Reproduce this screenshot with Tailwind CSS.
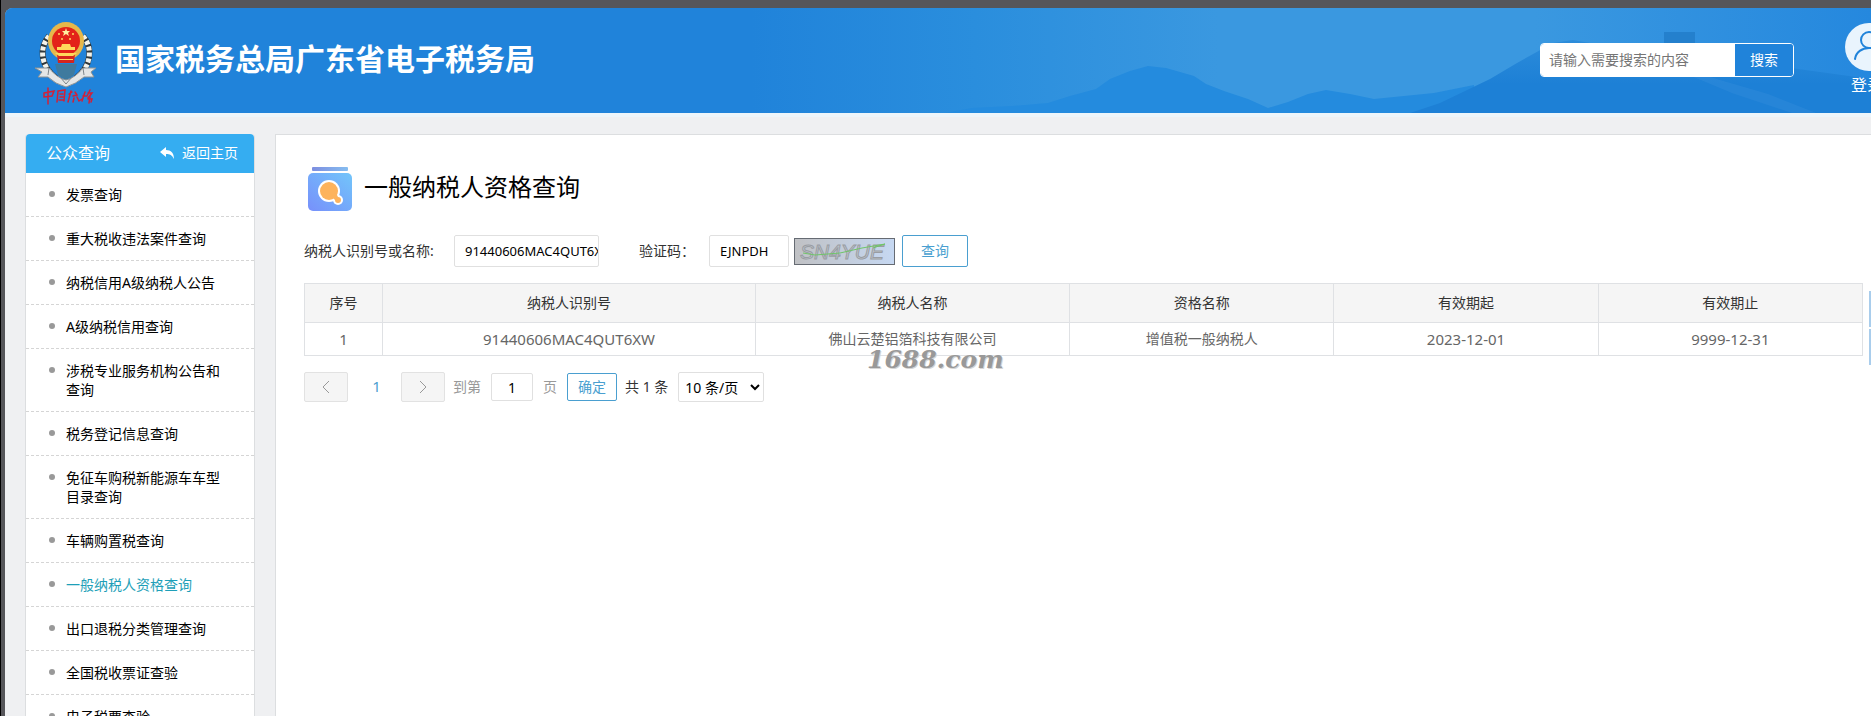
<!DOCTYPE html>
<html lang="zh-CN">
<head>
    <meta charset="UTF-8">
    <meta name="viewport" content="width=device-width, initial-scale=1.0">
    <title>一般纳税人资格查询</title>
    <script src="https://cdn.jsdelivr.net/npm/@tailwindcss/browser@4"></script>
</head>
<body class="min-h-screen overflow-x-hidden bg-[#56565a] border-l border-black pl-1 pt-2 text-sm text-black font-['Noto_Sans','Noto_Sans_CJK_SC',sans-serif]">
    <div class="min-h-screen overflow-hidden rounded-tl-lg bg-[#eff0f2]">

        <!-- Header -->
        <header class="relative flex h-[105px] items-center overflow-hidden bg-[#2083da] pl-7">
            <svg class="absolute inset-0 h-full w-full" viewBox="0 0 1866 105" preserveAspectRatio="xMaxYMid slice" aria-hidden="true">
                <defs>
                    <linearGradient id="sky" x1="0" y1="0" x2="1" y2="0">
                        <stop offset="0.4" stop-color="#2083da"/>
                        <stop offset="0.52" stop-color="#2a8edd"/>
                        <stop offset="0.65" stop-color="#3a98e0"/>
                        <stop offset="0.82" stop-color="#3a98e0"/>
                        <stop offset="1" stop-color="#2588de"/>
                    </linearGradient>
                    <linearGradient id="hill" x1="0" y1="0" x2="0" y2="1">
                        <stop offset="0" stop-color="#2c8cda"/>
                        <stop offset="0.6" stop-color="#1d80d6"/>
                    </linearGradient>
                </defs>
                <rect width="1866" height="105" fill="url(#sky)"/>
                <path d="M940 105l27-5 40-2 36-3 22-7 26-7 14-10 20-8 18-5 18 2 28 8 12 8 18 7 24 8 20 9 20-6 20-8 18-4 24 4 24 5 60-6 40-8v28z" fill="#248bde"/>
                <path d="M1405 105l30-10 50-24 27-16 36-20 20-3 17 3 30 8 60 4 60 6 131 18v34z" fill="url(#hill)"/>
                <path d="M1659 24h31v14h-31z" fill="#2480cd"/>
                <path d="M1640 48l75 24 48 14 48 19h-24l-60-20-60-25z" fill="#3a8fdc" opacity=".35"/>
            </svg>

            <svg class="relative mt-[2px] h-[86px] w-16 shrink-0" viewBox="0 0 64 86" role="img" aria-label="中国税务">
                <g fill="none" stroke="#30383b" stroke-width="6">
                    <path d="M16 17C6 29 7 47 24 60"/>
                    <path d="M50 17C60 29 59 47 42 60"/>
                </g>
                <g fill="none" stroke="#f3f3ec" stroke-width="5" stroke-dasharray="4 2">
                    <path d="M16 17C6 29 7 47 24 60"/>
                    <path d="M50 17C60 29 59 47 42 60"/>
                </g>
                <path d="M22 45l22 0-3 11-8 5-8-5z" fill="#3e7a9e"/>
                <ellipse cx="33" cy="22" rx="18" ry="19" fill="#e6b84b"/>
                <circle cx="33" cy="22" r="14" fill="#e32219"/>
                <path d="M24 35h18l-1 9H25z" fill="#d5251d"/>
                <path d="M33 9l1 3h3l-2 2 1 3-3-2-3 2 1-3-2-2h3z" fill="#fff0a0"/>
                <g fill="#ffd95c">
                    <circle cx="26" cy="15" r="1"/><circle cx="40" cy="15" r="1"/><circle cx="29" cy="20" r="1"/><circle cx="37" cy="20" r="1"/>
                    <path d="M29 25h8l1 3h4v3H24v-3h4zM22 34h22l-4 3H26zM26 40h14v1H26z"/>
                </g>
                <path d="M2 49l14 0q8 10 17 12q9-2 17-12h13l-5 4 3 5h-10q-8 7-18 10q-11-3-18-10H5l4-5z" fill="#e4e6e6" stroke="#8b9295" stroke-width="1"/>
                <path d="M16 49l-1 7M50 49l1 7M27 58l6 7 6-7" fill="none" stroke="#7f868a"/>
                <g fill="none" stroke="#d41f36" stroke-width="1.5" stroke-linecap="round">
                    <path d="M11 74l10-2-2 5-8 1zM15 69v16"/>
                    <path d="M25 72l-1 11M25 72l7-1-1 11M27 75l3 0M27 78h3M26 81l4 0"/>
                    <path d="M38 72l-3 11M36 75l3-2M42 73l2 3-4 1M41 79l-1 4M44 78l2 4 3-2"/>
                    <path d="M52 73l-3 9M50 77l3 0M57 71l-3 6M55 74h4l-4 5M57 77l-1 7M55 80h4l-1 3"/>
                </g>
            </svg>
            <h1 class="relative ml-[18px] whitespace-nowrap pb-1 text-[30px] font-bold leading-10 text-white">国家税务总局广东省电子税务局</h1>

            <form class="relative mb-[2px] ml-auto mr-[51px] flex h-[34px] w-[254px] shrink-0 overflow-hidden rounded-sm border border-white">
                <input type="text" aria-label="搜索内容" placeholder="请输入需要搜索的内容" class="min-w-0 flex-1 bg-white px-2 text-sm placeholder-[#757575] outline-none">
                <button type="button" class="w-[58px] bg-[#2083da] text-sm text-white">搜索</button>
            </form>
            <a href="#" class="relative -mr-[22px] flex shrink-0 flex-col gap-[2px] pb-[2px] text-base leading-6 text-white">
                <svg class="h-12 w-12" viewBox="0 0 48 48" aria-hidden="true">
                    <circle cx="24" cy="24" r="24" fill="#e9f4fd"/>
                    <g fill="none" stroke="#2083da" stroke-width="2" stroke-linecap="round">
                        <circle cx="24" cy="17" r="8"/>
                        <path d="M10 36c1-7 7-11 14-11s13 4 14 11"/>
                    </g>
                </svg>
                <span class="pl-[6px]">登录</span>
            </a>
        </header>

        <div class="flex items-stretch gap-5 border-t-4 border-[#edf5fa] pt-[17px] pl-5">

            <!-- Sidebar -->
            <aside class="w-[230px] shrink-0 rounded-t-sm border border-t-0 border-[#dcdee0] bg-white">
                <div class="flex h-[39px] items-center justify-between rounded-t-sm bg-[#35adf1] pb-[2px] pl-5 pr-4 text-white">
                    <h2 class="text-base">公众查询</h2>
                    <a href="#" class="flex items-center gap-2">
                        <svg class="h-3 w-[14px]" viewBox="0 0 14 12" fill="currentColor" aria-hidden="true"><path d="M6 0v3c5 0 8 3 8 9-2-4-4-5-8-5v3L0 5z"/></svg>
                        返回主页
                    </a>
                </div>
                <ul id="menu" class="leading-[19px]">
                    <li class="flex border-b border-dashed border-[#d5d5d5] py-3 pl-[23px] pr-6"><span class="mt-[6px] mr-[11px] size-[6px] shrink-0 rounded-full bg-[#999]"></span><a href="#">发票查询</a></li>
                    <li class="flex border-b border-dashed border-[#d5d5d5] py-3 pl-[23px] pr-6"><span class="mt-[6px] mr-[11px] size-[6px] shrink-0 rounded-full bg-[#999]"></span><a href="#">重大税收违法案件查询</a></li>
                    <li class="flex border-b border-dashed border-[#d5d5d5] py-3 pl-[23px] pr-6"><span class="mt-[6px] mr-[11px] size-[6px] shrink-0 rounded-full bg-[#999]"></span><a href="#">纳税信用A级纳税人公告</a></li>
                    <li class="flex border-b border-dashed border-[#d5d5d5] py-3 pl-[23px] pr-6"><span class="mt-[6px] mr-[11px] size-[6px] shrink-0 rounded-full bg-[#999]"></span><a href="#">A级纳税信用查询</a></li>
                    <li class="flex border-b border-dashed border-[#d5d5d5] py-3 pl-[23px] pr-6"><span class="mt-[6px] mr-[11px] size-[6px] shrink-0 rounded-full bg-[#999]"></span><a href="#">涉税专业服务机构公告和查询</a></li>
                    <li class="flex border-b border-dashed border-[#d5d5d5] py-3 pl-[23px] pr-6"><span class="mt-[6px] mr-[11px] size-[6px] shrink-0 rounded-full bg-[#999]"></span><a href="#">税务登记信息查询</a></li>
                    <li class="flex border-b border-dashed border-[#d5d5d5] py-3 pl-[23px] pr-6"><span class="mt-[6px] mr-[11px] size-[6px] shrink-0 rounded-full bg-[#999]"></span><a href="#">免征车购税新能源车车型目录查询</a></li>
                    <li class="flex border-b border-dashed border-[#d5d5d5] py-3 pl-[23px] pr-6"><span class="mt-[6px] mr-[11px] size-[6px] shrink-0 rounded-full bg-[#999]"></span><a href="#">车辆购置税查询</a></li>
                    <li class="flex border-b border-dashed border-[#d5d5d5] py-3 pl-[23px] pr-6"><span class="mt-[6px] mr-[11px] size-[6px] shrink-0 rounded-full bg-[#999]"></span><a href="#" class="text-[#1e9fb8]">一般纳税人资格查询</a></li>
                    <li class="flex border-b border-dashed border-[#d5d5d5] py-3 pl-[23px] pr-6"><span class="mt-[6px] mr-[11px] size-[6px] shrink-0 rounded-full bg-[#999]"></span><a href="#">出口退税分类管理查询</a></li>
                    <li class="flex border-b border-dashed border-[#d5d5d5] py-3 pl-[23px] pr-6"><span class="mt-[6px] mr-[11px] size-[6px] shrink-0 rounded-full bg-[#999]"></span><a href="#">全国税收票证查验</a></li>
                    <li class="flex border-b border-dashed border-[#d5d5d5] py-3 pl-[23px] pr-6"><span class="mt-[6px] mr-[11px] size-[6px] shrink-0 rounded-full bg-[#999]"></span><a href="#">电子税票查验</a></li>
                </ul>
            </aside>

            <!-- Main content -->
            <main class="relative min-w-0 flex-1 border-l border-t border-[#dcdee0] bg-white pl-7 pr-2 pt-8">
                <div class="flex items-center gap-3 pl-1">
                    <svg class="h-11 w-11" viewBox="0 0 44 44" aria-hidden="true">
                        <defs>
                            <linearGradient id="box" x1="0" y1="1" x2="1" y2="0"><stop offset="0" stop-color="#7790fb"/><stop offset="1" stop-color="#72c5fa"/></linearGradient>
                            <linearGradient id="lid" x1="0" y1="0" x2="1" y2="0"><stop offset="0" stop-color="#7d8ee0"/><stop offset="1" stop-color="#86bdf0"/></linearGradient>
                        </defs>
                        <rect x="4" y="0" width="36" height="4" rx="1" fill="url(#lid)"/>
                        <rect y="6" width="44" height="38" rx="5" fill="url(#box)"/>
                        <circle cx="21" cy="24" r="11" fill="#fff"/>
                        <circle cx="30" cy="33" r="5" fill="#fff"/>
                        <circle cx="21" cy="24" r="9" fill="#fdb35c"/>
                        <path d="M23 29l5-3 2 4q3 0 3 3 0 3-3 3-3 0-3-3z" fill="#fdb35c"/>
                    </svg>
                    <h2 class="pb-1 text-2xl">一般纳税人资格查询</h2>
                </div>

                <form class="mt-6 flex items-center text-[#333]">
                    <label for="taxpayer" class="w-[150px] shrink-0">纳税人识别号或名称:</label>
                    <input id="taxpayer" type="text" value="91440606MAC4QUT6XW" class="h-8 w-[145px] rounded-xs border border-[#e0e0e0] bg-white pl-[10px] text-[13px] text-black outline-none">
                    <label for="captcha" class="ml-10 w-[70px] shrink-0">验证码：</label>
                    <input id="captcha" type="text" value="EJNPDH" class="h-8 w-20 rounded-xs border border-[#e0e0e0] bg-white pl-[10px] text-[13px] text-black outline-none">
                    <svg class="ml-[5px] h-[27px] w-[101px]" viewBox="0 0 101 27" role="img" aria-label="验证码图片">
                        <defs><linearGradient id="cap" x1="0" y1="0" x2="1" y2="0"><stop offset="0" stop-color="#c0c1c4"/><stop offset="1" stop-color="#c6d8f2"/></linearGradient></defs>
                        <rect x=".5" y=".5" width="100" height="26" fill="url(#cap)" stroke="#666b73"/>
                        <text x="6" y="21" font-family="Liberation Sans" font-size="21" font-style="italic" fill="#c2c8cf" stroke="#999da3" stroke-width="1">SN4YUE</text>
                        <path d="M9 15l12 2 25-2 22-5 23-4-12 4" fill="none" stroke="#6fc568" stroke-width="1"/>
                    </svg>
                    <button type="button" class="ml-[7px] h-8 w-[66px] rounded-xs border border-[#4a9fd0] bg-white text-[#4a9fd0]">查询</button>
                </form>

                <table class="mt-4 w-full table-fixed border-collapse text-center leading-5">
                    <colgroup>
                        <col class="w-[78px]"><col class="w-[373px]"><col class="w-[314px]"><col><col><col>
                    </colgroup>
                    <thead class="bg-[#f5f5f5] text-[#333]">
                        <tr class="h-[39px]">
                            <th class="border border-[#dfe1e4] font-normal">序号</th>
                            <th class="border border-[#dfe1e4] font-normal">纳税人识别号</th>
                            <th class="border border-[#dfe1e4] font-normal">纳税人名称</th>
                            <th class="border border-[#dfe1e4] font-normal">资格名称</th>
                            <th class="border border-[#dfe1e4] font-normal">有效期起</th>
                            <th class="border border-[#dfe1e4] font-normal">有效期止</th>
                        </tr>
                    </thead>
                    <tbody class="text-[#666]">
                        <tr class="h-[33px]">
                            <td class="border border-[#dfe1e4] text-[15px]">1</td>
                            <td class="border border-[#dfe1e4] text-[15px]">91440606MAC4QUT6XW</td>
                            <td class="border border-[#dfe1e4]">佛山云楚铝箔科技有限公司</td>
                            <td class="border border-[#dfe1e4]">增值税一般纳税人</td>
                            <td class="border border-[#dfe1e4] text-[15px]">2023-12-01</td>
                            <td class="border border-[#dfe1e4] text-[15px]">9999-12-31</td>
                        </tr>
                    </tbody>
                </table>

                <!-- Pagination -->
                <div class="mt-4 flex items-center text-[#333]">
                    <button type="button" aria-label="上一页" class="flex h-[30px] w-11 items-center justify-center rounded-xs border border-[#e2e2e2] bg-[#f5f5f5] text-[#999]">
                        <svg class="h-3 w-2" viewBox="0 0 8 12" fill="none" stroke="currentColor"><path d="M7 0L1 6l6 6"/></svg>
                    </button>
                    <span class="w-[53px] pl-1 text-center text-[15px] text-[#4a9fd0]">1</span>
                    <button type="button" aria-label="下一页" class="flex h-[30px] w-11 items-center justify-center rounded-xs border border-[#e2e2e2] bg-[#f5f5f5] text-[#999]">
                        <svg class="h-3 w-2" viewBox="0 0 8 12" fill="none" stroke="currentColor"><path d="M1 0l6 6-6 6"/></svg>
                    </button>
                    <label for="page" class="ml-2 text-[#999]">到第</label>
                    <input id="page" type="text" value="1" class="mx-[10px] h-7 w-[42px] rounded-xs border border-[#e0e0e0] bg-white text-center text-black outline-none">
                    <span class="text-[#999]">页</span>
                    <button type="button" class="ml-[10px] h-7 w-[50px] rounded-xs border border-[#4a9fd0] bg-white text-[#4a9fd0]">确定</button>
                    <span class="ml-2">共 1 条</span>
                    <select aria-label="每页条数" class="ml-[10px] h-[30px] w-[86px] rounded-xs border border-[#e0e0e0] bg-white pl-[2px] text-sm text-black outline-none">
                        <option>10 条/页</option>
                        <option>20 条/页</option>
                        <option>50 条/页</option>
                    </select>
                </div>

                <!-- Watermark over the table -->
                <div class="pointer-events-none absolute left-[591px] top-[207px] whitespace-nowrap font-['DejaVu_Serif',serif] text-[25px] font-bold italic text-[#999] [text-shadow:1px_1px_0_#d5d5d5]">1688.com</div>

                <!-- Floating side buttons -->
                <div class="absolute right-0 top-[156px] flex w-[2px] flex-col gap-[2px]">
                    <a href="#" aria-label="咨询" class="h-9 bg-[#a9cdec]"></a>
                    <a href="#" aria-label="反馈" class="h-9 bg-[#a9cdec]"></a>
                </div>
            </main>
        </div>
    </div>
</body>
</html>
